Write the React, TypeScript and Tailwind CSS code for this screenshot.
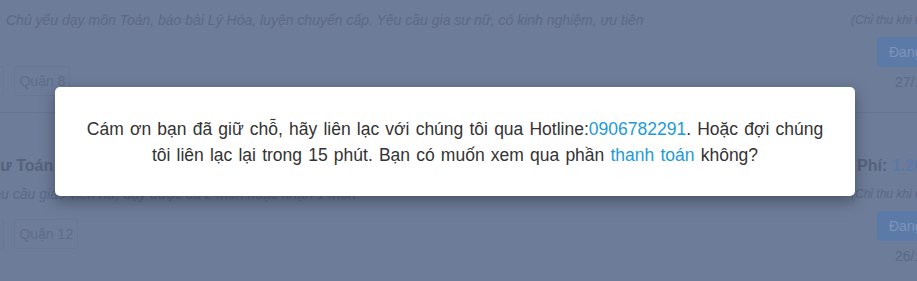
const FONT = "font-['Liberation_Sans',Arial,sans-serif]";

type Post = {
    title: string;
    titleShift: string;
    fee?: boolean;
    desc: string;
    descShift: string;
    tagGap: string;
    tags: string[];
    date: string;
};

const POSTS: Post[] = [
    {
        title: "Tuyển gia sư lớp 9, quận 8, dạy kèm tại nhà",
        titleShift: "ml-[40px]",
        desc: "Chủ yếu dạy môn Toán, báo bài Lý Hóa, luyện chuyển cấp. Yêu cầu gia sư nữ, có kinh nghiệm, ưu tiên",
        descShift: "ml-[6px]",
        tagGap: "mt-[33px]",
        tags: ["Online", "Quận 8"],
        date: "27/11/2019",
    },
    {
        title: "Gia sư Toán",
        titleShift: "ml-[-39px]",
        fee: true,
        desc: "Yêu cầu giáo viên nữ, dạy được cả 2 môn hoặc nhận 1 môn",
        descShift: "ml-[-16px]",
        tagGap: "mt-[12px]",
        tags: ["Online", "Quận 12"],
        date: "26/11/2019",
    },
];

function PostRow({ post, first }: { post: Post; first: boolean }) {
    return (
        <div
            className={`flex w-[1100px] ${first ? "h-[134px] border-b border-[#66748f]" : "pt-[40px]"}`}
        >
            <div className="w-[845px] shrink-0">
                <div
                    className={`h-[26px] whitespace-nowrap text-[16px] font-bold leading-[26px] text-[#56627d] ${post.titleShift}`}
                >
                    {post.title}
                </div>
                <div
                    className={`mt-[2px] h-[26px] whitespace-nowrap text-[14px] italic leading-[26px] text-[#5c6987] ${post.descShift}`}
                >
                    {post.desc}
                </div>
                <div className={`ml-[-46px] flex gap-[10px] ${post.tagGap}`}>
                    {post.tags.map((t) => (
                        <span
                            key={t}
                            className="rounded-[3px] border border-[#687793] px-[4px] text-[14px] leading-[28px] text-[#606d8a]"
                        >
                            {t}
                        </span>
                    ))}
                </div>
            </div>
            <div className="w-[200px] shrink-0 pl-[6px]">
                <div className="h-[26px] whitespace-nowrap pl-[6px] text-[16px] font-bold leading-[26px] text-[#56627d]">
                    {post.fee ? (
                        <>
                            Phí: <span className="text-[#5a79a6]">1.200.000đ</span>
                        </>
                    ) : null}
                </div>
                <div className="mt-[2px] h-[26px] whitespace-nowrap text-[12px] italic leading-[26px] text-[#5c6987]">
                    (Chỉ thu khi nhận lớp)
                </div>
                <div className="ml-[26px] mt-[4px] inline-block rounded-[4px] bg-[#5b7aa7] px-[12px] text-[14px] leading-[30px] text-[#7f94ba]">
                    Đang chờ
                </div>
                <div className="ml-[44px] mt-[4px] text-[14px] leading-[22px] text-[#5c6987]">
                    {post.date}
                </div>
            </div>
        </div>
    );
}

export default function App() {
    return (
        <div className={`relative h-[281px] w-[917px] overflow-hidden bg-[#6d7c99] ${FONT}`}>
            <div className="mt-[-21px]">
                {POSTS.map((p, i) => (
                    <PostRow key={i} post={p} first={i === 0} />
                ))}
            </div>

            <div className="absolute inset-0">
                <div className="absolute left-[55px] top-[87px] w-[800px] rounded-[5px] bg-white px-[28px] pb-[28px] pt-[29px] text-center text-[17.5px] leading-[26px] text-[#333] [word-spacing:1.3px] shadow-[0_5px_15px_rgba(0,0,0,0.35)]">
                    Cám ơn bạn đã giữ chỗ, hãy liên lạc với chúng tôi qua Hotline:
                    <a className="text-[#1e9ad6]">0906782291</a>. Hoặc đợi chúng tôi liên lạc lại trong 15
                    phút. Bạn có muốn xem qua phần <a className="text-[#1e9ad6]">thanh toán</a> không?
                </div>
            </div>
        </div>
    );
}
